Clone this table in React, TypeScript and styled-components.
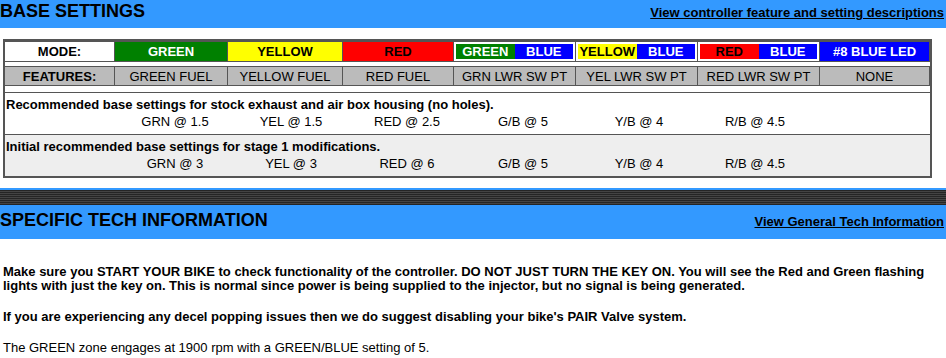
import React from 'react'
import styled, { createGlobalStyle } from 'styled-components'

const GlobalStyle = createGlobalStyle`
  html, body {
    margin: 0;
    padding: 0;
    background: #fff;
    font-family: "Liberation Sans", Arial, Helvetica, sans-serif;
    color: #000;
  }
`

interface Mode {
  label: string
  bg: string
  fg: string
  second?: boolean
}

const modes: Mode[] = [
  { label: 'GREEN', bg: '#008000', fg: '#fff' },
  { label: 'YELLOW', bg: '#ffff00', fg: '#000' },
  { label: 'RED', bg: '#ff0000', fg: '#000' },
  { label: 'GREEN', bg: '#008000', fg: '#fff', second: true },
  { label: 'YELLOW', bg: '#ffff00', fg: '#000', second: true },
  { label: 'RED', bg: '#ff0000', fg: '#000', second: true },
]

const features = [
  'GREEN FUEL',
  'YELLOW FUEL',
  'RED FUEL',
  'GRN LWR SW PT',
  'YEL LWR SW PT',
  'RED LWR SW PT',
  'NONE',
]

const settings = [
  {
    title: 'Recommended base settings for stock exhaust and air box housing (no holes).',
    values: ['GRN @ 1.5', 'YEL @ 1.5', 'RED @ 2.5', 'G/B @ 5', 'Y/B @ 4', 'R/B @ 4.5'],
    shaded: false,
  },
  {
    title: 'Initial recommended base settings for stage 1 modifications.',
    values: ['GRN @ 3', 'YEL @ 3', 'RED @ 6', 'G/B @ 5', 'Y/B @ 4', 'R/B @ 4.5'],
    shaded: true,
  },
]

const App: React.FC = () => {
  return (
    <>
      <GlobalStyle />
      <Page>
        <HeaderBar $height={28} $top={0}>
          <Title>BASE SETTINGS</Title>
          <HeaderLink href="#">View controller feature and setting descriptions</HeaderLink>
        </HeaderBar>

        <SettingsTable>
          <CellRow>
            <Cell $bg="#fff" $bold>MODE:</Cell>
            {modes.map((m, i) =>
              m.second ? (
                <SplitCell key={i}>
                  <Half $bg={m.bg} $fg={m.fg}>{m.label}</Half>
                  <Half $bg="#0000ff" $fg="#fff">BLUE</Half>
                </SplitCell>
              ) : (
                <Cell key={i} $bg={m.bg} $fg={m.fg} $bold>
                  {m.label}
                </Cell>
              )
            )}
            <Cell $bg="#0000ff" $fg="#fff" $bold>#8 BLUE LED</Cell>
          </CellRow>
          <CellRow $gap>
            <Cell $bg="#bbb" $bold>FEATURES:</Cell>
            {features.map((f) => (
              <Cell key={f} $bg="#bbb">{f}</Cell>
            ))}
          </CellRow>

          {settings.map((s) => (
            <SettingRow key={s.title} $shaded={s.shaded}>
              <SettingTitle>{s.title}</SettingTitle>
              <Values>
                {s.values.map((v) => (
                  <span key={v}>{v}</span>
                ))}
              </Values>
            </SettingRow>
          ))}
        </SettingsTable>

        <Stripe />

        <HeaderBar $height={34} $top={4}>
          <Title>SPECIFIC TECH INFORMATION</Title>
          <HeaderLink href="#">View General Tech Information</HeaderLink>
        </HeaderBar>

        <Body>
          <BoldText>
            Make sure you START YOUR BIKE to check functionality of the controller. DO NOT JUST TURN THE KEY ON.
            You will see the Red and Green flashing lights with just the key on. This is normal since power is
            being supplied to the injector, but no signal is being generated.
          </BoldText>
          <BoldText $top={17}>
            If you are experiencing any decel popping issues then we do suggest disabling your bike's PAIR Valve system.
          </BoldText>
          <PlainText>The GREEN zone engages at 1900 rpm with a GREEN/BLUE setting of 5.</PlainText>
        </Body>
      </Page>
    </>
  )
}

const Page = styled.div`
  width: 946px;
  overflow: hidden;
`

const HeaderBar = styled.div<{ $height: number; $top: number }>`
  background-color: #3399ff;
  height: ${(p) => p.$height}px;
  padding: ${(p) => p.$top}px 2px 0 0;
  box-sizing: border-box;
  display: flex;
  justify-content: space-between;
  align-items: baseline;
`

const Title = styled.h2`
  margin: 0;
  font-size: 18px;
  line-height: 22px;
  font-weight: bold;
`

const HeaderLink = styled.a`
  font-size: 13px;
  font-weight: bold;
  color: #000;
  text-decoration: underline;
`

const SettingsTable = styled.div`
  margin: 11px 0 0 3px;
  width: 929px;
  box-sizing: border-box;
  border: 2px solid #555;
  background: #fff;
`

const CellRow = styled.div<{ $gap?: boolean }>`
  display: grid;
  grid-template-columns: 110px 113px 115px 111px 122px 122px 122px 1fr;
  height: 20px;
  margin-top: ${(p) => (p.$gap ? 5 : 0)}px;
  margin-bottom: ${(p) => (p.$gap ? 6 : 5)}px;
`

const Cell = styled.div<{ $bg: string; $fg?: string; $bold?: boolean }>`
  background-color: ${(p) => p.$bg};
  color: ${(p) => p.$fg || '#000'};
  font-size: 13px;
  font-weight: ${(p) => (p.$bold ? 'bold' : 'normal')};
  border: 1px solid #555;
  border-left-width: 0;
  display: flex;
  align-items: center;
  justify-content: center;
  white-space: nowrap;
`

const SplitCell = styled.div`
  background: #fff;
  border: 1px solid #555;
  border-left-width: 0;
  padding: 2px;
  display: flex;
`

const Half = styled.div<{ $bg: string; $fg: string }>`
  flex: 1;
  background-color: ${(p) => p.$bg};
  color: ${(p) => p.$fg};
  font-size: 13px;
  font-weight: bold;
  display: flex;
  align-items: center;
  justify-content: center;
`

const SettingRow = styled.div<{ $shaded: boolean }>`
  border-top: 1px solid #555;
  background-color: ${(p) => (p.$shaded ? '#eee' : '#fff')};
  padding: 4px 3px 5px 1px;
  font-size: 13px;
  line-height: 15px;
`

const SettingTitle = styled.div`
  font-weight: bold;
`

const Values = styled.div`
  margin-top: 2px;
  padding-left: 111px;
  display: grid;
  grid-template-columns: repeat(6, 116px);
  text-align: center;
`

const Stripe = styled.div`
  margin-top: 10px;
  border-top: 2px solid #3399ff;
  height: 15px;
  background: repeating-linear-gradient(to bottom, #252525 0, #252525 1px, #444 1px, #444 2px);
`

const Body = styled.div`
  padding: 26px 0 0 3px;
  font-size: 13px;
  line-height: 14px;
`

const BoldText = styled.p<{ $top?: number }>`
  margin: ${(p) => p.$top || 0}px 0 0;
  font-weight: bold;
`

const PlainText = styled.p`
  margin: 17px 0 0;
`

export default App
